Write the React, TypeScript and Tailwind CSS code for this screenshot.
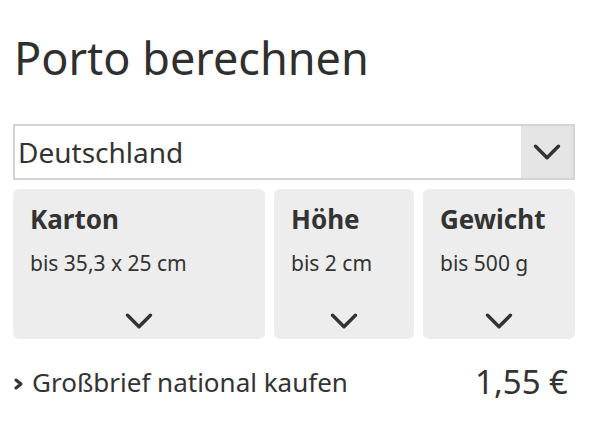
import React from 'react';

function Chevron({ className }: { className?: string }) {
  return (
    <svg viewBox="0 0 24 14" className={className} fill="none" stroke="currentColor" strokeWidth={3} strokeLinecap="round" strokeLinejoin="round">
      <path d="M2 2l10 10L22 2" />
    </svg>
  );
}

const cards = [
  { title: 'Karton', value: 'bis 35,3 x 25 cm', w: 'w-[252px]' },
  { title: 'Höhe', value: 'bis 2 cm', w: 'w-[140px]' },
  { title: 'Gewicht', value: 'bis 500 g', w: 'w-[152px]' },
];

export default function App() {
  return (
    <div className="w-[590px] h-[422px] bg-white text-[#333] font-['Noto_Sans',sans-serif] pl-[13px] pr-[15px] pt-[28px]">
      <h1 className="text-[45px] leading-[60px] pl-[1px] text-[#2f2f2f]">Porto berechnen</h1>

      <div className="mt-[36px] flex h-[56px] border-2 border-[#d4d4d4] bg-white">
        <div className="flex-1 flex items-center pl-[3px] text-[28px] text-[#333]">Deutschland</div>
        <div className="w-[52px] bg-[#e5e5e5] flex items-center justify-center">
          <Chevron className="w-[28px] h-[16px] text-[#333]" />
        </div>
      </div>

      <div className="mt-[9px] flex gap-[9px]">
        {cards.map((c) => (
          <div key={c.title} className={`${c.w} h-[150px] rounded-[6px] bg-[#ededed] flex flex-col pl-[17px] pt-[12px]`}>
            <div className="text-[26px] font-bold leading-[36px] text-[#333]">{c.title}</div>
            <div className="mt-[12px] text-[21px] leading-[28px] text-[#333]">{c.value}</div>
            <div className="mt-auto mb-[10px] -ml-[17px] flex justify-center">
              <Chevron className="w-[28px] h-[16px] text-[#333]" />
            </div>
          </div>
        ))}
      </div>

      <div className="mt-[25px] flex items-center justify-between pl-[1px]">
        <div className="flex items-center gap-[9px]">
          <svg viewBox="0 0 9 12" className="w-[9px] h-[12px] mt-[4px] text-[#333]" fill="none" stroke="currentColor" strokeWidth={3} strokeLinecap="round" strokeLinejoin="round">
            <path d="M2 2l5 4-5 4" />
          </svg>
          <span className="text-[26px] leading-[34px] text-[#333]">Großbrief national kaufen</span>
        </div>
        <span className="text-[33px] leading-[36px] text-[#333] pr-[7px]">1,55 €</span>
      </div>
    </div>
  );
}
